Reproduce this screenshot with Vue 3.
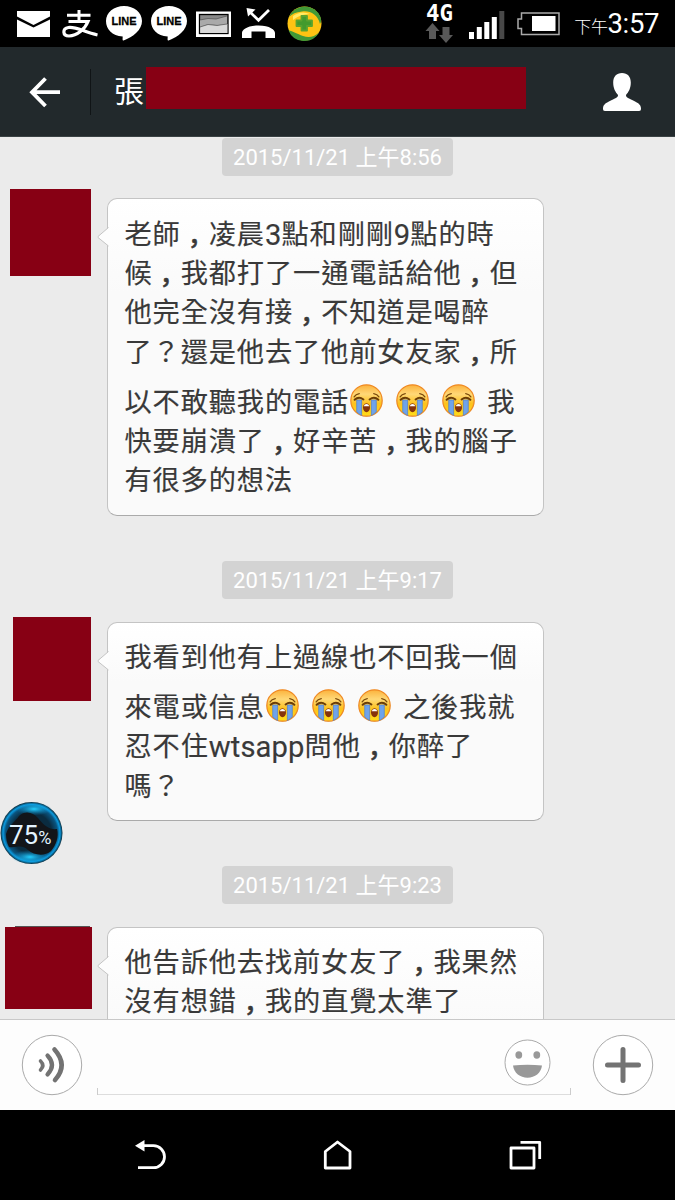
<script setup>
import { h } from 'vue'

const messages = [
  {
    id: 'a',
    time: '2015/11/21 上午8:56',
    lines: [
      '老師，凌晨3點和剛剛9點的時',
      '候，我都打了一通電話給他，但',
      '他完全沒有接，不知道是喝醉',
      '了？還是他去了他前女友家，所',
      '以不敢聽我的電話***我',
      '快要崩潰了，好辛苦，我的腦子',
      '有很多的想法',
    ],
  },
  {
    id: 'b',
    time: '2015/11/21 上午9:17',
    lines: ['我看到他有上過線也不回我一個', '來電或信息***之後我就', '忍不住wtsapp問他，你醉了', '嗎？'],
  },
  {
    id: 'c',
    time: '2015/11/21 上午9:23',
    lines: ['他告訴他去找前女友了，我果然', '沒有想錯，我的直覺太準了'],
  },
]

// Splits a line into plain runs, Latin runs, commas and crying-face markers.
const tokens = (line) => line.split(/([，*]|[a-z0-9]+)/).filter(Boolean)
const isLatin = (t) => /^[a-z0-9]+$/.test(t)

const CryFace = () =>
  h('svg', { viewBox: '0 0 32 32' }, [
    h('circle', { cx: 16, cy: 16.6, r: 15.4, fill: '#b9a58c', opacity: 0.5 }),
    h('circle', { cx: 16, cy: 16, r: 15.2, fill: 'url(#face)', stroke: '#f08a24', 'stroke-width': 1.2 }),
    h('path', { d: 'M6.500 15.500h4.800V30.500Q8.500 29 6.500 27zM20.700 15.500h4.800V27Q23.500 29 20.700 30.500z', fill: '#6fa3ea', stroke: '#4e80cf', 'stroke-width': 0.7 }),
    h('path', { d: 'M4.500 15.300Q8.500 11.500 13 15M19 15Q23.500 11.500 27.500 15.300', fill: 'none', stroke: '#6b3d08', 'stroke-width': 2, 'stroke-linecap': 'round' }),
    h('path', { d: 'M4 12.500Q5.500 9.800 9 9.300M28 12.500Q26.500 9.800 23 9.300', fill: 'none', stroke: '#7b4a0c', 'stroke-width': 1.2, 'stroke-linecap': 'round' }),
    h('path', { d: 'M16 18.700c2.300 0 3.400 2.200 3.400 4.300S18 27.300 16 27.300s-3.400-2.200-3.400-4.300 1.100-4.300 3.400-4.300z', fill: '#85330c' }),
    h('path', { d: 'M13.300 21.500q.6-2.100 2.700-2.100t2.700 2.100z', fill: '#fff' }),
  ])
</script>

<template>
  <div class="screen">
    <svg class="defs" width="0" height="0">
      <defs>
        <linearGradient id="face" x1="0" y1="0" x2="0" y2="1">
          <stop offset="0" stop-color="#fbb23c" />
          <stop offset="0.3" stop-color="#ffd877" />
          <stop offset="0.6" stop-color="#fdc21c" />
          <stop offset="1" stop-color="#ffdd18" />
        </linearGradient>
      </defs>
    </svg>

    <div class="status">
      <svg class="status-icons" width="340" height="47" viewBox="0 0 340 47">
        <path d="M17 11h33v5.500L33.500 25 17 16.500z" fill="#fff" />
        <path d="M17 19.500L33.500 27.500 50 19.500V37H17z" fill="#fff" />
        <g fill="none" stroke="#fff">
          <path d="M67 15.200h23.500M79 10v12" stroke-width="3" />
          <path d="M68.500 21.500H88C85 29 77 36 69 36c-6.500 0-7-7.500-.5-8.500C76 26.500 84 32 97.500 35" stroke-width="3.200" />
        </g>
        <g fill="#fff">
          <path d="M124 6c10 0 18 6.500 18 15 0 9-9 16-18.500 19.500-1 .3-1-.5-.8-4C112 36 106 29 106 21c0-8.500 8-15 18-15z" />
          <path d="M169 6c10 0 18 6.500 18 15 0 9-9 16-18.500 19.500-1 .3-1-.5-.8-4C157 36 151 29 151 21c0-8.500 8-15 18-15z" />
        </g>
        <text class="line-logo" x="124" y="25" textLength="25" lengthAdjust="spacingAndGlyphs">LINE</text>
        <text class="line-logo" x="169" y="25" textLength="25" lengthAdjust="spacingAndGlyphs">LINE</text>
        <rect x="196" y="11.500" width="35" height="25.500" fill="#fff" />
        <rect x="199.500" y="14.500" width="28.500" height="19" fill="#888" stroke="#000" stroke-width="1.300" />
        <path d="M200 20l8-1.500 8 .5 11-3v8l-9 1-10-1-8 3z" fill="#aaa" />
        <path d="M200.200 27l8-2.500 9 1 10.200-1.500v9h-27.200z" fill="#d9d9d9" />
        <path d="M200 20l8-1.500 8 .5 11-3M200 27l8-2.500 9 1 10-1.500" fill="none" stroke="#444" stroke-width=".6" />
        <path d="M249 11l9.500 9.300L269 10" fill="none" stroke="#fff" stroke-width="2.800" />
        <path d="M246.500 8l9 1.500-7.500 7z" fill="#fff" />
        <path d="M242 38V33c0-3 5-7.500 16.500-7.500S275 30 275 33v5h-9.500v-6.500h-14V38z" fill="#fff" />
        <circle cx="304.500" cy="23.500" r="17" fill="#fec313" />
        <path d="M289 17A17 17 0 0 1 320.500 17C321.500 21 321 22 320 24 318 14 309 10 302 11.500 296 12 292 14 289 17z" fill="#429937" />
        <path d="M288.500 30.500A17 17 0 0 0 319 32.500C314 37 309 38 303 36 297 34 293 31 288.500 30.500z" fill="#429937" />
        <path d="M293 16q8-6 17-2-10 0-17 6z" fill="#ffeb64" />
        <path d="M301.500 16h5.500v4.500h5v5.500h-5v4.500h-5.500V26h-5v-5.500h5z" fill="#429a2d" stroke="#5aa32e" stroke-width="1.800" stroke-linejoin="round" />
      </svg>
      <svg class="status-signal" width="160" height="47" viewBox="420 0 160 47">
        <text class="network" x="426" y="21" textLength="27" lengthAdjust="spacingAndGlyphs">4G</text>
        <path d="M432.500 23l7 8h-3.500v8h-7v-8h-3.500zM446 43l-7-8h3.500v-8h7v8h3.500z" fill="#595959" />
        <path d="M469 32h5v7h-5zM476.800 27h5v12h-5zM484.300 22h5v17h-5zM491.800 17h5v22h-5z" fill="#fff" />
        <path d="M499.300 11h5v28h-5z" fill="#484848" />
        <path d="M521.500 13H559v21.500h-37.500v-6H518V19h3.500z" fill="none" stroke="#aaa" stroke-width="1.500" />
        <path d="M532 16h23.500v15H532z" fill="#fff" />
      </svg>
      <div class="clock"><span class="ampm">下午</span>3:57</div>
    </div>

    <header class="header">
      <svg class="back" width="34" height="34" viewBox="0 0 34 34">
        <path d="M17.500 3.500L4 17.200 17.500 31M5 17.200H32" fill="none" stroke="#fff" stroke-width="3.800" />
      </svg>
      <div class="divider"></div>
      <div class="name">張</div>
      <div class="name-mask"></div>
      <svg class="person" width="40" height="40" viewBox="0 0 40 40">
        <path d="M20 1c5.500 0 8.800 3.800 8.800 9.500 0 6-2.300 9.500-4.800 12.500 0 2 1 2.400 5 4.500C35 30.300 39 32 39 36.500c0 1.700-.5 2.500-2 2.500H3c-1.500 0-2-.8-2-2.500C1 32 5 30.300 11 27.500c4-2.100 5-2.500 5-4.500-2.500-3-4.800-6.500-4.800-12.500C11.200 4.800 14.500 1 20 1z" fill="#fff" />
      </svg>
    </header>

    <main class="chat">
      <section v-for="m in messages" :key="m.id" class="entry" :class="'entry-' + m.id">
        <div class="stamp">{{ m.time }}</div>
        <div class="row">
          <div class="avatar"></div>
          <div class="bubble">
            <svg class="tail" width="12" height="20" viewBox="0 0 12 20">
              <path d="M11.500 0.500L1 9.500Q.5 10 1 10.500L11.500 19" fill="#fdfdfd" stroke="#c4c4c4" />
            </svg>
            <div v-for="(line, i) in m.lines" :key="i" class="line" :class="{ tall: line.includes('*') }">
              <template v-for="(t, j) in tokens(line)" :key="j"><CryFace v-if="t === '*'" class="face" /><span v-else-if="t === '，'" class="comma">，</span><span v-else :class="{ latin: isLatin(t) }">{{ t }}</span></template>
            </div>
          </div>
        </div>
      </section>
    </main>

    <div class="battery-ball">
      <svg class="ball-art" width="64" height="64" viewBox="0 0 64 64">
        <defs>
          <radialGradient id="ring" cx=".5" cy=".5" r=".5">
            <stop offset="0.650" stop-color="#0a2c40" />
            <stop offset="0.840" stop-color="#0a5580" />
            <stop offset="0.920" stop-color="#0b9be0" />
            <stop offset="1" stop-color="#0a2836" />
          </radialGradient>
          <radialGradient id="glow" cx=".5" cy=".5" r=".5">
            <stop offset="0" stop-color="#25d0ff" />
            <stop offset="1" stop-color="#0a8ccc" stop-opacity="0" />
          </radialGradient>
        </defs>
        <circle cx="31.500" cy="32" r="31" fill="url(#ring)" />
        <ellipse cx="30" cy="56" rx="19" ry="7" fill="url(#glow)" />
        <ellipse cx="34" cy="8" rx="18" ry="6.500" fill="url(#glow)" />
        <path d="M6 33C8 25 16 20 19 15 25 9 33 11 38 17 44 25 50 29 57 28 59 36 56 44 51 50 44 56 34 54 28 49 22 43 17 47 9 46 7 42 6 38 6 33z" fill="#121519" />
      </svg>
      <div class="ball-text">75<span class="percent">%</span></div>
    </div>

    <footer class="composer">
      <svg class="voice" width="62" height="62" viewBox="0 0 62 62">
        <circle cx="31" cy="31" r="29.700" fill="#fff" stroke="#aaa" />
        <g fill="none" stroke="#737373" stroke-linecap="round">
          <path d="M19.500 27q4.500 4.500 0 9" stroke-width="3.600" />
          <path d="M26.500 21.500q9 9.500 0 19" stroke-width="4.200" />
          <path d="M33.500 15.500q14 15.500.5 30.500" stroke-width="4.600" />
        </g>
      </svg>
      <div class="field">
        <svg class="smile" width="47" height="47" viewBox="0 0 47 47">
          <circle cx="23.500" cy="23.500" r="22.500" fill="#fff" stroke="#aaa" />
          <ellipse cx="14.800" cy="16" rx="3.400" ry="3.700" fill="#999" />
          <ellipse cx="32.800" cy="16" rx="3.400" ry="3.700" fill="#999" />
          <path d="M9 26.500Q23.500 25 38 26.500C37 34 31 38.700 23.500 38.700S10 34 9 26.500z" fill="#999" />
        </svg>
      </div>
      <svg class="plus" width="62" height="62" viewBox="0 0 62 62">
        <circle cx="31" cy="31" r="29.700" fill="#fff" stroke="#aaa" />
        <path d="M31 15.500v31M15.500 31h31" stroke="#737373" stroke-width="5" stroke-linecap="round" />
      </svg>
    </footer>

    <nav class="nav">
      <svg width="675" height="90" viewBox="0 0 675 90">
        <g fill="none" stroke="#fff" stroke-width="2.800" stroke-linejoin="round">
          <path d="M143 35.700h10.500a11 11 0 0 1 0 22H138" />
          <path d="M325.300 58V41.500L337.500 32 350 41.500V58z" />
          <path d="M511 38h23v20h-23zM520.500 32.300h19.200V49" />
        </g>
        <path d="M135 35.700L144.500 30v11.500z" fill="#fff" />
      </svg>
    </nav>
  </div>
</template>

<style>
body {
  margin: 0;
  background: #000;
}
</style>

<style scoped>
.screen {
  position: relative;
  display: flex;
  flex-direction: column;
  width: 675px;
  height: 1200px;
  overflow: hidden;
  background: #000;
  font-family: Roboto, "Noto Sans CJK TC", sans-serif;
}
.screen svg {
  display: block;
  flex: none;
}
.screen .defs {
  position: absolute;
}
.status {
  display: flex;
  height: 47px;
  color: #fff;
}
.status-signal {
  margin-left: 80px;
}
.line-logo {
  font: bold 11.5px "Liberation Sans", sans-serif;
  text-anchor: middle;
  fill: #000;
  stroke: #000;
  stroke-width: 0.3px;
}
.network {
  font: bold 22.5px "DejaVu Sans Mono", monospace;
  fill: #fff;
}
.clock {
  flex: 1;
  padding-right: 16px;
  font-size: 27.5px;
  letter-spacing: -0.4px;
  line-height: 48px;
  text-align: right;
  white-space: nowrap;
  margin-left: -10px;
}
.ampm {
  font-size: 17px;
  font-weight: 300;
}
.header {
  display: flex;
  align-items: center;
  box-sizing: border-box;
  height: 90px;
  background: #22292c;
  border-bottom: 1px solid #3a4244;
}
.back {
  margin-left: 28px;
}
.divider {
  width: 1px;
  height: 46px;
  margin-left: 28px;
  background: #101416;
}
.name {
  width: 31px;
  margin-left: 23px;
  color: #fff;
  font-size: 30px;
  line-height: 44px;
}
.name-mask {
  width: 380px;
  height: 42px;
  margin: -7px 0 0 1px;
  background: #870014;
}
.person {
  margin-left: 76px;
}
.chat {
  height: 882px;
  overflow: hidden;
  background: #ebebeb;
}
.entry {
  display: flex;
  flex-direction: column;
  align-items: center;
  padding-top: 1px;
}
.entry-b,
.entry-c {
  padding-top: 45px;
}
.stamp {
  width: 231px;
  height: 38px;
  border-radius: 4px;
  background: #d3d3d3;
  color: #fff;
  font-size: 22px;
  line-height: 40px;
  text-align: center;
  white-space: nowrap;
}
.row {
  display: flex;
  align-items: flex-start;
  align-self: stretch;
  margin-top: 22px;
}
.entry-b .row,
.entry-c .row {
  margin-top: 23px;
}
.avatar {
  flex: none;
  width: 81px;
  height: 87px;
  margin: -9px 16px 0 10px;
  background: #870014;
}
.entry-b .avatar {
  width: 78px;
  height: 84px;
  margin: -5px 16px 0 13px;
}
.entry-c .avatar {
  box-sizing: border-box;
  width: 87px;
  height: 83px;
  margin: -1px 15px 0 5px;
  background:
    linear-gradient(#555, #555) 10px 0 / 75px 1px no-repeat,
    linear-gradient(#870014, #870014) 0 1px / 100% 82px no-repeat;
}
.bubble {
  position: relative;
  box-sizing: border-box;
  width: 437px;
  height: 318px;
  padding: 16.500px 0 0 16.500px;
  border: 1px solid #c4c4c4;
  border-bottom-color: #aaa;
  border-radius: 10px;
  background: linear-gradient(#fff, #fafafa 30%);
  color: #393939;
}
.entry-b .bubble {
  height: 199px;
}
.entry-b .bubble,
.entry-c .bubble {
  padding-top: 16px;
}
.tail {
  position: absolute;
  top: 28px;
  left: -11px;
}
.line {
  display: flex;
  height: 39.4px;
  font-size: 27.2px;
  letter-spacing: 0.9px;
  line-height: 39.4px;
  white-space: nowrap;
  -webkit-text-stroke: 0.15px #393939;
}
.tall {
  padding-top: 10.500px;
}
.latin {
  font-size: 29.2px;
  letter-spacing: 0.1px;
}
.comma {
  box-sizing: border-box;
  width: 28.1px;
  padding-left: 7px;
  font-family: "Noto Sans CJK JP", sans-serif;
  font-feature-settings: "halt";
  line-height: 35.4px;
  -webkit-text-stroke: 0.6px #393939;
}
.face {
  width: 33px;
  height: 33px;
  margin: 0 12px 0 1px;
}
.battery-ball {
  position: absolute;
  top: 801px;
  left: 0;
  width: 64px;
  height: 64px;
}
.ball-art {
  position: absolute;
  top: 0;
  left: 0;
}
.ball-text {
  position: relative;
  padding-left: 9px;
  color: #e4f4ff;
  font-size: 26px;
  line-height: 68px;
  white-space: nowrap;
}
.percent {
  font-size: 18px;
}
.composer {
  display: flex;
  align-items: flex-start;
  box-sizing: border-box;
  height: 91px;
  padding: 14px 21px 0;
  border-top: 1px solid #c8c8c8;
  background: #fdfdfd;
}
.field {
  display: flex;
  justify-content: flex-end;
  box-sizing: border-box;
  width: 474px;
  height: 61px;
  margin: 0 21px 0 14px;
  padding: 5px 20px 0 0;
  background:
    linear-gradient(#ccc, #ccc) left bottom / 1px 7px no-repeat,
    linear-gradient(#ccc, #ccc) right bottom / 1px 7px no-repeat,
    linear-gradient(#ddd, #ddd) left bottom / 100% 1px no-repeat;
}
.nav {
  height: 90px;
  background: #000;
}
</style>
